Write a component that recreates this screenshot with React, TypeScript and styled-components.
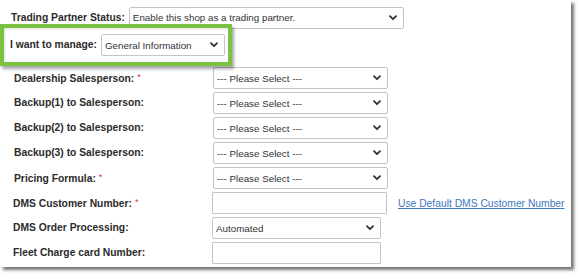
import React from 'react';
import styled, { createGlobalStyle } from 'styled-components';

const GlobalStyle = createGlobalStyle`
  html, body {
    margin: 0;
    padding: 0;
    background: #ffffff;
  }
  body {
    font-family: "Liberation Sans", Arial, sans-serif;
  }
`;

const Page = styled.div`
  width: 582px;
  height: 280px;
  background: #ffffff;
  overflow: hidden;
`;

const Card = styled.div`
  width: 571px;
  height: 267px;
  background: #ffffff;
  box-shadow: 3px 3px 3px rgba(0, 0, 0, 0.55);
  box-sizing: border-box;
  padding-top: 7px;
  display: flex;
  flex-direction: column;
`;

const StatusRow = styled.div`
  display: flex;
  align-items: center;
  padding-left: 11px;
  gap: 4px;
  height: 21px;
`;

const ManageBox = styled.div`
  position: relative;
  z-index: 1;
  margin-top: -4px;
  width: 232px;
  height: 42px;
  box-sizing: border-box;
  border: 4px solid #7cc242;
  background: #ffffff;
  box-shadow: 2px 3px 3px rgba(0, 0, 0, 0.35), inset 1px 1px 3px rgba(0, 0, 0, 0.12);
  display: flex;
  align-items: center;
  padding-left: 6px;
  gap: 4px;
`;

const Form = styled.div`
  display: flex;
  flex-direction: column;
  gap: 3px;
  padding-top: 1px;
`;

const Row = styled.div`
  display: flex;
  align-items: center;
  height: 22px;
`;

const Label = styled.span<{ $width?: number; $indent?: number }>`
  font-size: 10.3px;
  font-weight: bold;
  color: #2b2b2b;
  white-space: nowrap;
  width: ${(p) => (p.$width ? `${p.$width}px` : 'auto')};
  padding-left: ${(p) => p.$indent ?? 0}px;
  margin-top: -1px;
  box-sizing: border-box;
  flex-shrink: 0;
`;

const Required = styled.span`
  color: #d9343a;
  font-weight: normal;
  font-size: 9px;
  margin-left: 3px;
  vertical-align: 2px;
`;

const SelectWrap = styled.div<{ $width: number }>`
  position: relative;
  width: ${(p) => p.$width}px;
  height: 22px;
  flex-shrink: 0;
`;

const NativeSelect = styled.select`
  appearance: none;
  -webkit-appearance: none;
  width: 100%;
  height: 100%;
  box-sizing: border-box;
  border: 1px solid #c2c4cc;
  border-radius: 2px;
  background: #ffffff;
  font-family: "Liberation Sans", Arial, sans-serif;
  font-size: 9.8px;
  color: #333333;
  padding: 0 16px 0 3px;
  margin: 0;
  outline: none;
`;

const Chevron = styled.svg`
  position: absolute;
  right: 7px;
  top: 8px;
  width: 8px;
  height: 6px;
  pointer-events: none;
`;

const TextInput = styled.input<{ $width: number }>`
  width: ${(p) => p.$width}px;
  height: 22px;
  box-sizing: border-box;
  border: 1px solid #c2c4cc;
  border-radius: 1px;
  background: #ffffff;
  margin: 0;
  padding: 0 4px;
  flex-shrink: 0;
  outline: none;
`;

const Link = styled.a`
  margin-left: 11px;
  font-size: 10.3px;
  color: #3d78c0;
  text-decoration: underline;
  white-space: nowrap;
  margin-top: 1px;
`;

interface SelectProps {
  width: number;
  value: string;
}

const Select: React.FC<SelectProps> = ({ width, value }) => (
  <SelectWrap $width={width}>
    <NativeSelect defaultValue={value}>
      <option>{value}</option>
    </NativeSelect>
    <Chevron viewBox="0 0 8 6">
      <path d="M1 1.2 L4 4.2 L7 1.2" fill="none" stroke="#333" strokeWidth="1.8" strokeLinecap="round" strokeLinejoin="round" />
    </Chevron>
  </SelectWrap>
);

const please = '--- Please Select ---';

const rows: { label: string; required?: boolean; kind: 'select' | 'input'; width: number; value?: string; indent: number; col: number }[] = [
  { label: 'Dealership Salesperson:', required: true, kind: 'select', width: 175, value: please, indent: 14, col: 213 },
  { label: 'Backup(1) to Salesperson:', kind: 'select', width: 175, value: please, indent: 14, col: 213 },
  { label: 'Backup(2) to Salesperson:', kind: 'select', width: 175, value: please, indent: 14, col: 213 },
  { label: 'Backup(3) to Salesperson:', kind: 'select', width: 175, value: please, indent: 14, col: 213 },
  { label: 'Pricing Formula:', required: true, kind: 'select', width: 175, value: please, indent: 14, col: 213 },
  { label: 'DMS Customer Number:', required: true, kind: 'input', width: 175, indent: 13, col: 212 },
  { label: 'DMS Order Processing:', kind: 'select', width: 169, value: 'Automated', indent: 13, col: 212 },
  { label: 'Fleet Charge card Number:', kind: 'input', width: 169, indent: 13, col: 212 },
];

const App: React.FC = () => (
  <Page>
    <GlobalStyle />
    <Card>
      <StatusRow>
        <Label>Trading Partner Status:</Label>
        <Select width={275} value="Enable this shop as a trading partner." />
      </StatusRow>
      <ManageBox>
        <Label>I want to manage:</Label>
        <Select width={124} value="General Information" />
      </ManageBox>
      <Form>
        {rows.map((row) => (
          <Row key={row.label}>
            <Label $width={row.col} $indent={row.indent}>
              {row.label}
              {row.required && <Required>*</Required>}
            </Label>
            {row.kind === 'select' ? (
              <Select width={row.width} value={row.value ?? ''} />
            ) : (
              <TextInput $width={row.width} />
            )}
            {row.label === 'DMS Customer Number:' && <Link href="#">Use Default DMS Customer Number</Link>}
          </Row>
        ))}
      </Form>
    </Card>
  </Page>
);

export default App;
